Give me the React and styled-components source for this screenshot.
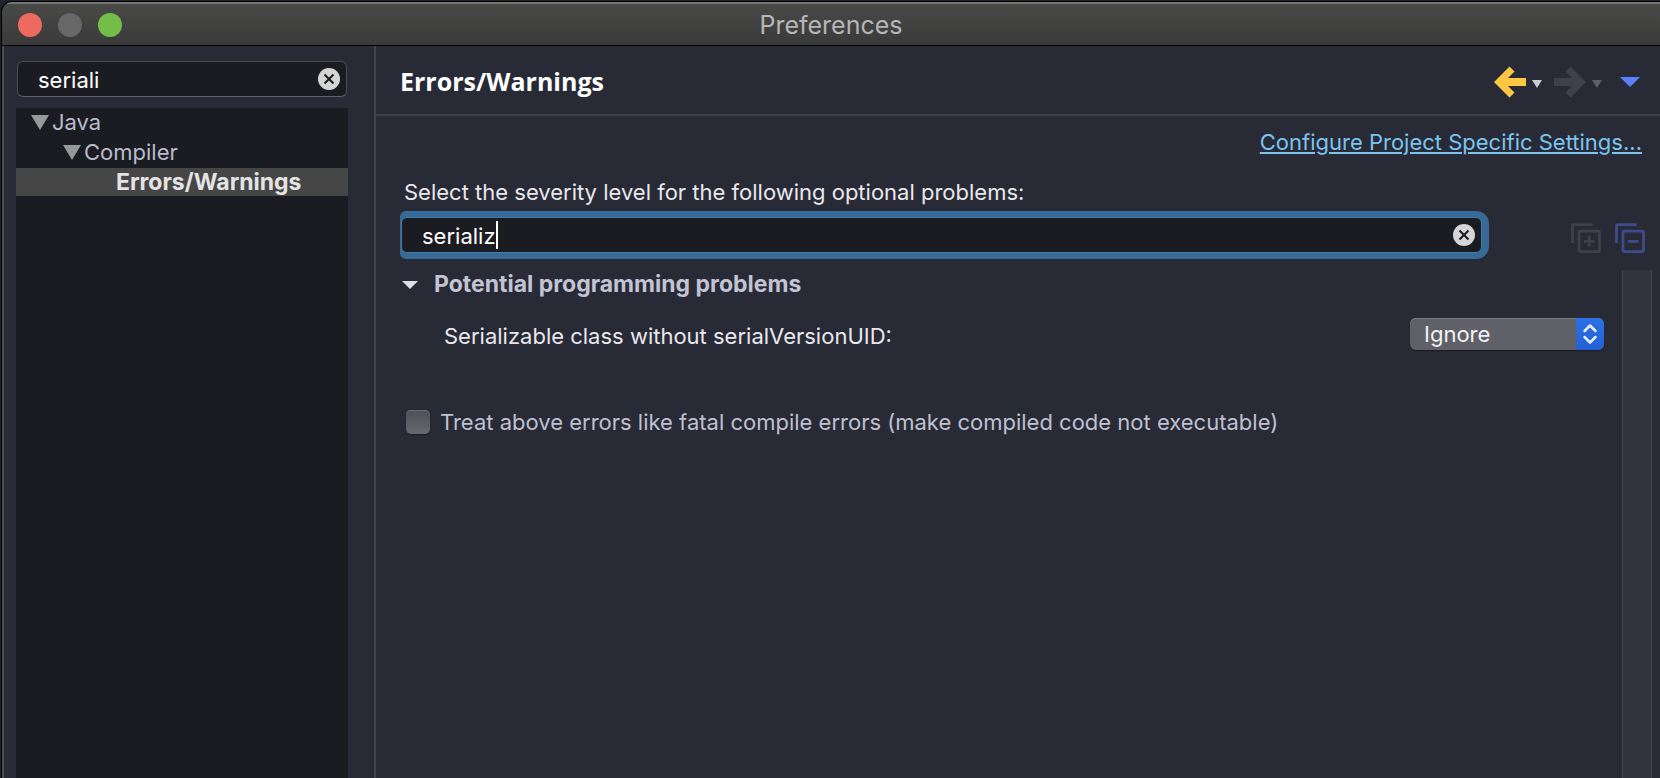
import React, { useId, useState } from "react";
import styled, { createGlobalStyle } from "styled-components";

const sans = 'Inter, "Liberation Sans", sans-serif';
const heading = '"Open Sans", "Noto Sans", sans-serif';

const GlobalStyle = createGlobalStyle`
  *, *::before, *::after { box-sizing: border-box; }
  body { margin: 0; background: #20222d; overflow: hidden; }
  button, input, select { font: inherit; color: inherit; margin: 0; padding: 0; border: 0; background: none; }
`;

const Desktop = styled.div`
  display: flex;
  min-height: 100vh;
  padding: 1px 0 0 1px;
  font: 400 22px/30px ${sans};
  color: #e8e8ec;
`;

const Window = styled.main`
  flex: 1;
  display: flex;
  flex-direction: column;
  min-width: 0;
  border: solid #000;
  border-width: 1px 0 0 1px;
  border-radius: 11px 0 0 0;
  overflow: hidden;
  background: #282a36;
`;

const TitleBar = styled.header`
  display: grid;
  grid-template-columns: 1fr auto 1fr;
  align-items: center;
  height: 44px;
  padding: 0 16px;
  border-top: 2px solid #777774;
  border-bottom: 1px solid #000;
  background: linear-gradient(#494948, #3a3a3a);
`;

const TrafficLights = styled.div`
  display: flex;
  gap: 16px;
`;

const Light = styled.button`
  width: 24px;
  height: 24px;
  border-radius: 50%;
  background: ${(p) => p.$color};
`;

const WindowTitle = styled.h1`
  margin: 0;
  font: 400 25px/30px ${sans};
  color: #b6b6b6;
`;

const Body = styled.div`
  flex: 1;
  display: flex;
  border-left: 2px solid #4c4d56;
`;

const Sidebar = styled.nav`
  flex: 0 0 372px;
  display: flex;
  flex-direction: column;
  gap: 11px;
  padding: 15px 26px 0 12px;
  border-right: 2px solid #3f414c;
`;

const SearchBox = styled.div`
  display: flex;
  align-items: center;
  height: 36px;
  padding: 0 6px 0 20px;
  border: 1px solid #4b4c54;
  border-bottom-color: #60616a;
  border-radius: 6px;
  background: #1b1c22;
  color: #fff;
`;

const SidebarSearch = styled(SearchBox)`
  margin: 0 1px;
`;

const FocusedSearch = styled(SearchBox)`
  border-color: #427aa9;
`;

const FocusRing = styled.div`
  flex: 1;
  padding: 6px 7px 6px 1px;
  border-radius: 6px 13px 13px 6px;
  background: #386a98;
`;

const TextInput = styled.input`
  field-sizing: content;
  min-width: 2px;
  padding-top: 2px;
  outline: none;
  caret-color: ${(p) => (p.$drawnCaret ? "transparent" : "#fff")};
`;

const Caret = styled.span`
  width: 2px;
  height: 28px;
  background: #fff;
`;

const ClearButton = styled.button`
  display: flex;
  margin-left: auto;
`;

const Tree = styled.ul`
  flex: 1;
  margin: 0;
  padding: 0;
  list-style: none;
  background: #1b1c22;
`;

const TreeRow = styled.li`
  display: flex;
  align-items: center;
  gap: 3px;
  height: ${(p) => (p.$selected ? 28 : 30)}px;
  padding-left: ${(p) => p.$indent}px;
  padding-bottom: ${(p) => (p.$selected ? 0 : 2)}px;
  background: ${(p) => (p.$selected ? "#464646" : "none")};
  color: ${(p) => (p.$selected ? "#e4e4e4" : "#b9bbcd")};
  font-size: ${(p) => (p.$selected ? 23 : 22)}px;
  font-weight: ${(p) => (p.$selected ? 700 : 400)};
`;

const Page = styled.section`
  flex: 1;
  display: flex;
  flex-direction: column;
  min-width: 0;
`;

const PageHeader = styled.header`
  display: flex;
  align-items: center;
  justify-content: space-between;
  height: 70px;
  padding: 4px 20px 0 24px;
  border-bottom: 2px solid #3f414c;
`;

const PageTitle = styled.h2`
  margin: 0;
  padding-bottom: 2px;
  font: 700 25px/32px ${heading};
  color: #fff;
`;

const HistoryTools = styled.div`
  display: flex;
  align-items: center;
`;

const ToolButton = styled.button`
  display: flex;
  margin-left: ${(p) => p.$gap || 0}px;
`;

const HistoryMenuButton = styled(ToolButton)`
  padding-top: 4px;
  margin-left: 6px;
`;

const LinkRow = styled.div`
  display: flex;
  justify-content: flex-end;
  padding: 11px 18px 0;
`;

const SettingsLink = styled.a`
  color: #7cc4ee;
  text-decoration: underline;
  text-decoration-thickness: 2px;
  text-underline-offset: 2px;
`;

const Prompt = styled.label`
  padding: 20px 28px 4px;
`;

const FilterRow = styled.div`
  display: flex;
  align-items: center;
  padding: 0 15px 0 24px;
`;

const FilterTools = styled.div`
  display: flex;
  gap: 14px;
  margin-left: 82px;
  padding-top: 6px;
`;

const Results = styled.div`
  flex: 1;
  display: flex;
  justify-content: space-between;
  gap: 18px;
  padding: 11px 8px 0 24px;
`;

const Problems = styled.div`
  flex: 1;
  display: flex;
  flex-direction: column;
`;

const SectionToggle = styled.button`
  display: flex;
  align-items: center;
  gap: 16px;
  padding-left: 2px;
  text-align: left;
  font-size: 23px;
  font-weight: 700;
  line-height: 29px;
  color: #c3c4d3;
`;

const OptionRow = styled.div`
  display: flex;
  align-items: center;
  justify-content: space-between;
  margin-top: 18px;
  padding-left: 44px;
`;

const OptionLabel = styled.label`
  padding-top: 4px;
`;

const SelectFrame = styled.div`
  display: grid;
  grid-template-columns: 1fr 28px;
  width: 194px;
  height: 32px;
  border-radius: 6px;
  overflow: hidden;
  background: #5f6068;
  box-shadow: inset 0 1px #7b7c84, 0 1px 1px #1c1d25;
`;

const SeveritySelect = styled.select`
  grid-area: 1 / 1 / 2 / 3;
  appearance: none;
  padding: 0 28px 0 14px;
  line-height: 32px;
  outline: none;
  color: #f2f2f4;

  option { background: #5f6068; }
`;

const Stepper = styled.div`
  grid-area: 1 / 2 / 2 / 3;
  display: flex;
  align-items: center;
  justify-content: center;
  background: linear-gradient(#2c71e6, #2361d2);
  pointer-events: none;
`;

const FatalOption = styled.label`
  display: flex;
  align-items: center;
  gap: 10px;
  margin-top: 56px;
  padding-left: 6px;
  color: #bfc0d0;
`;

const Checkbox = styled.input`
  appearance: none;
  width: 24px;
  height: 24px;
  border-radius: 5px;
  background: linear-gradient(#4e4f58, #66676f);
  box-shadow: inset 0 1px #6c6d75, 0 1px 1px #1c1d25;

  &:checked { background: #2c71e6; }
`;

const ScrollTrack = styled.div`
  width: 30px;
  border: solid #44454f;
  border-width: 0 1px;
  background: #32333e;
`;

function ClearIcon() {
  return (
    <svg width="22" height="22" viewBox="0 0 22 22" aria-hidden="true">
      <circle cx="11" cy="11" r="11" fill="#d5d5d5" />
      <path d="M6.500 6.500l9 9M15.500 6.500l-9 9" stroke="#1b1c22" strokeWidth="2" />
    </svg>
  );
}

function Triangle({ width, height, color }) {
  return (
    <svg width={width} height={height} viewBox="0 0 10 10" preserveAspectRatio="none" aria-hidden="true">
      <path d="M0 0h10L5 10z" fill={color} />
    </svg>
  );
}

function Arrow({ color, forward }) {
  return (
    <svg width="32" height="32" viewBox="0 0 32 32" aria-hidden="true">
      <path
        d="M0 16L15.500 0.500L20.500 5.500L14 12H32V20H14L20.500 26.500L15.500 31.500Z"
        fill={color}
        transform={forward ? "translate(32 0) scale(-1 1)" : undefined}
      />
    </svg>
  );
}

function StackIcon({ color, plus }) {
  return (
    <svg width="30" height="30" viewBox="0 0 30 30" fill="none" stroke={color} strokeWidth="2.750" aria-hidden="true">
      <path d="M1.500 20V3q0-1.500 1.500-1.500H21.500" />
      <rect x="8" y="8" width="20.500" height="20.500" rx="1.500" />
      <path d={plus ? "M13 18.250h10.500M18.250 13v10.500" : "M13 18.250h10.500"} />
    </svg>
  );
}

function SearchField({ Box, id, label, initial, drawnCaret }) {
  const [value, setValue] = useState(initial);
  return (
    <Box>
      <TextInput
        id={id}
        aria-label={label}
        value={value}
        $drawnCaret={drawnCaret}
        onChange={(e) => setValue(e.target.value)}
      />
      {drawnCaret && <Caret />}
      <ClearButton type="button" aria-label="Clear" onClick={() => setValue("")}>
        <ClearIcon />
      </ClearButton>
    </Box>
  );
}

export default function App() {
  const filterId = useId();
  const severityId = useId();
  return (
    <Desktop>
      <GlobalStyle />
      <Window>
        <TitleBar>
          <TrafficLights>
            <Light type="button" aria-label="Close" $color="#ee695e" />
            <Light type="button" aria-label="Minimize" $color="#676767" disabled />
            <Light type="button" aria-label="Zoom" $color="#72be47" />
          </TrafficLights>
          <WindowTitle>Preferences</WindowTitle>
        </TitleBar>
        <Body>
          <Sidebar>
            <SearchField Box={SidebarSearch} label="Filter pages" initial="seriali" />
            <Tree>
              <TreeRow $indent={15}>
                <Triangle width={18} height={15} color="#98989b" />
                Java
              </TreeRow>
              <TreeRow $indent={47}>
                <Triangle width={18} height={15} color="#98989b" />
                Compiler
              </TreeRow>
              <TreeRow $indent={100} $selected>
                Errors/Warnings
              </TreeRow>
            </Tree>
          </Sidebar>
          <Page>
            <PageHeader>
              <PageTitle>Errors/Warnings</PageTitle>
              <HistoryTools>
                <ToolButton type="button" aria-label="Back">
                  <Arrow color="#fdc743" />
                </ToolButton>
                <HistoryMenuButton type="button" aria-label="Back history">
                  <Triangle width={10} height={8} color="#c9cad4" />
                </HistoryMenuButton>
                <ToolButton type="button" aria-label="Forward" $gap={12}>
                  <Arrow color="#3e404b" forward />
                </ToolButton>
                <HistoryMenuButton type="button" aria-label="Forward history">
                  <Triangle width={10} height={8} color="#5d5e67" />
                </HistoryMenuButton>
                <ToolButton type="button" aria-label="View menu" $gap={18}>
                  <Triangle width={20} height={10} color="#5c80fb" />
                </ToolButton>
              </HistoryTools>
            </PageHeader>
            <LinkRow>
              <SettingsLink href="#project">Configure Project Specific Settings...</SettingsLink>
            </LinkRow>
            <Prompt htmlFor={filterId}>Select the severity level for the following optional problems:</Prompt>
            <FilterRow>
              <FocusRing>
                <SearchField Box={FocusedSearch} id={filterId} initial="serializ" drawnCaret />
              </FocusRing>
              <FilterTools>
                <ToolButton type="button" aria-label="Expand all">
                  <StackIcon color="#3e404b" plus />
                </ToolButton>
                <ToolButton type="button" aria-label="Collapse all">
                  <StackIcon color="#3d4c8c" />
                </ToolButton>
              </FilterTools>
            </FilterRow>
            <Results>
              <Problems>
                <SectionToggle type="button" aria-expanded="true">
                  <Triangle width={16} height={8} color="#dedee2" />
                  Potential programming problems
                </SectionToggle>
                <OptionRow>
                  <OptionLabel htmlFor={severityId}>Serializable class without serialVersionUID:</OptionLabel>
                  <SelectFrame>
                    <SeveritySelect id={severityId} defaultValue="Ignore">
                      <option>Error</option>
                      <option>Warning</option>
                      <option>Info</option>
                      <option>Ignore</option>
                    </SeveritySelect>
                    <Stepper>
                      <svg width="16" height="22" viewBox="0 0 16 22" fill="none" stroke="#e6edfb" strokeWidth="2.500" strokeLinecap="round" strokeLinejoin="round" aria-hidden="true">
                        <path d="M2.500 8L8 2.500L13.500 8M2.500 14L8 19.500L13.500 14" />
                      </svg>
                    </Stepper>
                  </SelectFrame>
                </OptionRow>
                <FatalOption>
                  <Checkbox type="checkbox" />
                  Treat above errors like fatal compile errors (make compiled code not executable)
                </FatalOption>
              </Problems>
              <ScrollTrack />
            </Results>
          </Page>
        </Body>
      </Window>
    </Desktop>
  );
}
